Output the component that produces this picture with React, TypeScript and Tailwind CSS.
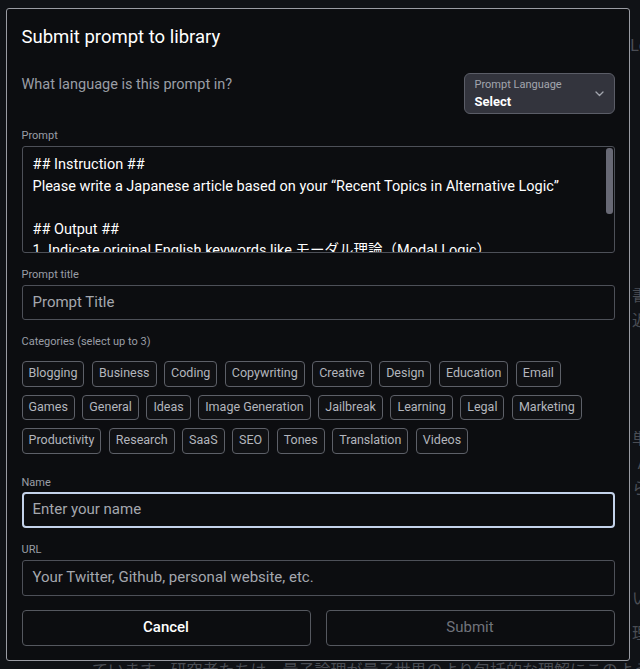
import React from "react";

const FONT = { fontFamily: "Roboto, 'Noto Sans CJK JP', 'Liberation Sans', sans-serif" };

const rows = [
  ["Blogging", "Business", "Coding", "Copywriting", "Creative", "Design", "Education", "Email"],
  ["Games", "General", "Ideas", "Image Generation", "Jailbreak", "Learning", "Legal", "Marketing"],
  ["Productivity", "Research", "SaaS", "SEO", "Tones", "Translation", "Videos"],
];

function BgLine({ h, text }: { h: number; text: string }) {
  return (
    <div className="flex justify-end overflow-hidden whitespace-nowrap text-[16px] text-[#4a4d54]" style={{ height: h }}>
      <span className="mr-[-8px] leading-none">{text}</span>
    </div>
  );
}

export default function App() {
  return (
    <div className="relative h-[669px] w-[640px] overflow-hidden bg-[#101216]" style={FONT}>
      {/* background page (behind modal) */}
      <div className="flex flex-col pt-[38px]">
        <BgLine h={250} text="Lo" />
        <BgLine h={25} text="書" />
        <BgLine h={118} text="近" />
        <BgLine h={25} text="単" />
        <BgLine h={25} text="A" />
        <BgLine h={110} text="ら" />
        <BgLine h={35} text="い" />
        <BgLine h={25} text="理" />
      </div>
      <div className="absolute left-[92px] top-[659px] whitespace-nowrap text-[16px] text-[#4a4d54]">
        ています。研究者たちは、量子論理が量子世界のより包括的な理解にこのよう
      </div>

      {/* modal */}
      <div className="absolute left-[6px] top-[8px] flex h-[653px] w-[624px] flex-col rounded-[3px] border-[1.5px] border-[#9a9ca3] bg-[#0c0d10] px-[14.5px] pt-[16px]">
        <h2 className="text-[18.5px] font-normal leading-[24px] text-white">Submit prompt to library</h2>

        <div className="mt-[24px] flex items-start justify-between">
          <div className="pt-[3px] text-[14.5px] leading-[18px] text-[#9a9ea6]">What language is this prompt in?</div>
          <div className="flex h-[41px] w-[151px] items-center justify-between rounded-[6px] border border-[#5b5d67] bg-[#33343d] pl-[10px] pr-[10px]">
            <div className="flex flex-col">
              <span className="text-[11px] leading-[14px] text-[#a3a6ae]">Prompt Language</span>
              <span className="mt-[2px] text-[13px] font-bold leading-[16px] text-white">Select</span>
            </div>
            <svg width="9" height="6" viewBox="0 0 9 6" fill="none">
              <path d="M1 1l3.5 3.5L8 1" stroke="#a3a6ae" strokeWidth="1.3" strokeLinecap="round" strokeLinejoin="round" />
            </svg>
          </div>
        </div>

        <div className="mt-[15px] text-[11px] leading-[14px] text-[#9a9ea6]">Prompt</div>
        <div className="relative mt-[3px] h-[107px] overflow-hidden rounded-[3px] border border-[#4d5058] bg-[#0c0d10] pl-[10px] pr-[20px] pt-[7px]">
          <div className="whitespace-pre text-[14.5px] leading-[21.5px] text-white">
            {"## Instruction ##\nPlease write a Japanese article based on your “Recent Topics in Alternative Logic”\n\n## Output ##\n1. Indicate original English keywords like モーダル理論（Modal Logic）"}
          </div>
          <div className="absolute right-[1px] top-[1px] h-[66px] w-[7px] rounded-[3px] bg-[#686975]" />
        </div>

        <div className="mt-[15px] text-[11px] leading-[14px] text-[#9a9ea6]">Prompt title</div>
        <div className="mt-[3px] flex h-[35px] items-center rounded-[3px] border border-[#4d5058] bg-[#0c0d10] px-[10px] text-[15px] text-[#a4a7ae]">
          Prompt Title
        </div>

        <div className="mt-[15px] text-[11px] leading-[14px] text-[#9a9ea6]">Categories (select up to 3)</div>
        <div className="mt-[12px] flex flex-col gap-[8px]">
          {rows.map((r, i) => (
            <div key={i} className="flex gap-[7.5px]">
              {r.map((c) => (
                <div key={c} className="flex h-[25.5px] items-center rounded-[4px] border border-[#5d6068] bg-[#101114] px-[6px] text-[12.5px] text-[#b3b6bd]">
                  {c}
                </div>
              ))}
            </div>
          ))}
        </div>

        <div className="mt-[22px] text-[11px] leading-[14px] text-[#9a9ea6]">Name</div>
        <div className="mt-[2px] flex h-[36px] items-center rounded-[4px] border-2 border-[#c4d2ea] bg-[#0c0d10] px-[9px] text-[15px] text-[#a4a7ae]">
          Enter your name
        </div>

        <div className="mt-[15px] text-[11px] leading-[14px] text-[#9a9ea6]">URL</div>
        <div className="mt-[3px] flex h-[36px] items-center rounded-[3px] border border-[#4d5058] bg-[#0c0d10] px-[10px] text-[15px] text-[#a4a7ae]">
          Your Twitter, Github, personal website, etc.
        </div>

        <div className="mt-[14px] flex gap-[15px]">
          <button className="flex h-[36px] flex-1 items-center justify-center rounded-[4px] border border-[#55585f] bg-[#0c0d10] text-[15px] font-medium text-white">
            Cancel
          </button>
          <button className="flex h-[36px] flex-1 items-center justify-center rounded-[4px] border border-[#55585f] bg-[#0c0d10] text-[15px] text-[#70737b]">
            Submit
          </button>
        </div>
      </div>
    </div>
  );
}
